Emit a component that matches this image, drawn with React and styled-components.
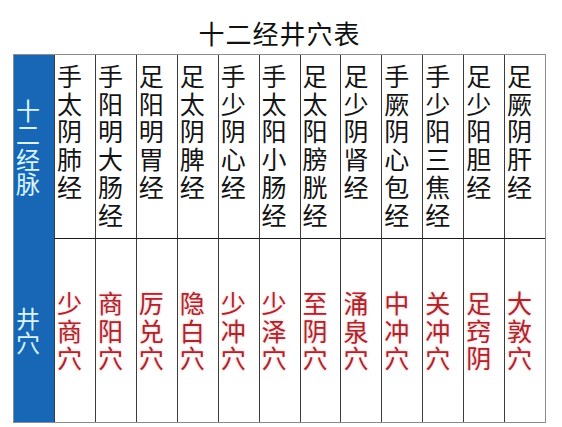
import styled, { createGlobalStyle } from 'styled-components'

const GlobalStyle = createGlobalStyle`
  html, body {
    margin: 0;
    padding: 0;
    background: #ffffff;
  }
  body {
    font-family: "Noto Sans CJK SC", "Noto Sans", sans-serif;
  }
`;

const channels = [
  { name: '手太阴肺经', point: '少商穴' },
  { name: '手阳明大肠经', point: '商阳穴' },
  { name: '足阳明胃经', point: '厉兑穴' },
  { name: '足太阴脾经', point: '隐白穴' },
  { name: '手少阴心经', point: '少冲穴' },
  { name: '手太阳小肠经', point: '少泽穴' },
  { name: '足太阳膀胱经', point: '至阴穴' },
  { name: '足少阴肾经', point: '涌泉穴' },
  { name: '手厥阴心包经', point: '中冲穴' },
  { name: '手少阳三焦经', point: '关冲穴' },
  { name: '足少阳胆经', point: '足窍阴' },
  { name: '足厥阴肝经', point: '大敦穴' },
];

const Page = styled.div`
  width: 533px;
  padding-left: 13px;
`;

const Title = styled.h1`
  margin: 0;
  padding-top: 17px;
  height: 37px;
  text-align: center;
  font-size: 26px;
  font-weight: 400;
  line-height: 32px;
  color: #111;
  letter-spacing: 1px;
`;

const Table = styled.div`
  box-sizing: border-box;
  width: 533px;
  height: 369px;
  border: 1px solid #8c8c8c;
  display: grid;
  grid-template-columns: 40px repeat(12, 1fr);
  grid-template-rows: 183px 184px;
  grid-auto-flow: column;
`;

const Label = styled.div`
  background: #1767b6;
  color: #d9f4ff;
  font-size: 24px;
  line-height: 24.5px;
  display: flex;
  align-items: center;
  padding-left: 2px;
  padding-top: ${p => p.$top || 0}px;
  box-sizing: border-box;
  word-break: break-all;
`;

const LabelText = styled.div`
  width: 26px;
`;

const Cell = styled.div`
  border-left: 1px solid #3c3c3c;
  border-top: ${p => (p.$bottom ? '1px solid #1a1a1a' : 'none')};
  display: flex;
  align-items: ${p => (p.$bottom ? 'center' : 'flex-start')};
  padding: ${p => (p.$bottom ? '0 0 0 2px' : '7px 0 0 2px')};
  box-sizing: border-box;
  min-width: 0;
`;

const Vertical = styled.div`
  width: 27px;
  font-size: 25px;
  line-height: 27.7px;
  word-break: break-all;
  color: ${p => (p.$red ? '#a8262c' : '#141414')};
  text-shadow: ${p => (p.$red ? '0 0 3px rgba(255, 90, 100, 0.45)' : 'none')};
`;

function App() {
  return (
    <Page>
      <GlobalStyle />
      <Title>十二经井穴表</Title>
      <Table>
        <Label $top={0}>
          <LabelText>十二经脉</LabelText>
        </Label>
        <Label $top={0}>
          <LabelText>井穴</LabelText>
        </Label>
        {channels.map(c => [
          <Cell key={c.name}>
            <Vertical>{c.name}</Vertical>
          </Cell>,
          <Cell key={c.point} $bottom>
            <Vertical $red>{c.point}</Vertical>
          </Cell>,
        ])}
      </Table>
    </Page>
  );
}

export default App;
